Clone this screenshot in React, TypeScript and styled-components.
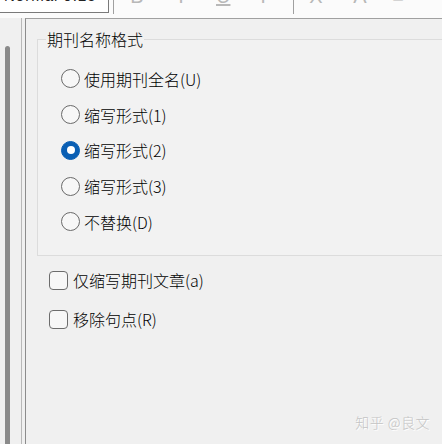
import React from "react";
import styled, { createGlobalStyle } from "styled-components";

const Global = createGlobalStyle`
  html, body { margin: 0; padding: 0; background: #f0f0f0; }
  #root { width: 442px; height: 444px; overflow: hidden; }
  * { box-sizing: border-box; }
`;

const FONT = `"Microsoft YaHei", "Noto Sans CJK SC", "Noto Sans", sans-serif`;

const Screen = styled.div`
  width: 442px;
  height: 444px;
  display: flex;
  flex-direction: column;
  position: relative;
  overflow: hidden;
  font-family: ${FONT};
  font-weight: 300;
  background: #f0f0f0;
`;

const Toolbar = styled.div`
  height: 18px;
  flex: none;
  display: flex;
  align-items: flex-start;
  background: #fbfbfb;
  overflow: hidden;
`;

const Combo = styled.div`
  width: 109px;
  height: 13px;
  border-right: 1px solid #7a7a7a;
  border-bottom: 1px solid #7a7a7a;
  background: #fff;
  overflow: hidden;
  padding-left: 4px;
  font-family: "Liberation Sans", sans-serif;
  font-size: 15px;
  line-height: 15px;
  color: #222;
  flex: none;
`;

const ComboText = styled.div`
  margin-top: -12px;
  letter-spacing: 1px;
`;

const Sep = styled.div<{ $ml: number }>`
  width: 1px;
  height: 14px;
  background: #a0a0a0;
  flex: none;
  margin-left: ${(p) => p.$ml}px;
`;

const Glyph = styled.div<{ $ml: number; $w?: number; $under?: boolean }>`
  margin-left: ${(p) => p.$ml}px;
  width: ${(p) => p.$w ?? 14}px;
  margin-top: -14px;
  font-family: "Liberation Sans", sans-serif;
  font-size: 20px;
  line-height: 20px;
  color: #b8b8b8;
  text-align: center;
  flex: none;
  ${(p) =>
    p.$under
      ? "text-decoration: underline; text-decoration-thickness: 2px; text-underline-offset: 1px;"
      : ""}
`;

const Body = styled.div`
  flex: 1;
  display: flex;
  min-height: 0;
`;

const SidePane = styled.div`
  width: 22px;
  flex: none;
  display: flex;
  padding-top: 28px;
  padding-left: 5px;
  border-right: 1px solid #b8b8b8;
  margin-right: 3px;
`;

const Thumb = styled.div`
  width: 5px;
  flex: none;
  background: #8a8a8a;
  border-radius: 3px 3px 0 0;
`;

const Main = styled.div`
  flex: 1;
  border-left: 1px solid #8c8c8c;
  border-top: 1px solid #a0a0a0;
  background: #f0f0f0;
  padding: 10px 0 0 11px;
  overflow: hidden;
  display: flex;
  flex-direction: column;
`;

const Group = styled.fieldset`
  margin: 0 -30px 0 0;
  padding: 0 0 15px 0;
  border: 1px solid #dcdcdc;
  background: #f2f2f2;
  min-width: 0;
`;

const Legend = styled.legend`
  padding: 0 1px;
  margin-left: 8px;
  font-size: 16px;
  line-height: 21px;
  color: #000;
`;

const Options = styled.div`
  display: flex;
  flex-direction: column;
  padding: 11px 0 0 23px;
`;

const Row = styled.label`
  display: flex;
  align-items: center;
  height: 35.75px;
  font-size: 16px;
  color: #000;
`;

const RadioCircle = styled.span<{ $on?: boolean }>`
  width: 19px;
  height: 19px;
  border-radius: 50%;
  flex: none;
  margin-right: 4px;
  display: flex;
  align-items: center;
  justify-content: center;
  background: ${(p) => (p.$on ? "#0a5fb4" : "#f7f7f7")};
  border: 1px solid ${(p) => (p.$on ? "#0a5fb4" : "#6a6a6a")};
`;

const Dot = styled.span`
  width: 8px;
  height: 8px;
  border-radius: 50%;
  background: #fff;
`;

const Checks = styled.div`
  display: flex;
  flex-direction: column;
  padding: 5px 0 0 12px;
`;

const CheckRow = styled.label`
  display: flex;
  align-items: center;
  height: 39px;
  font-size: 16px;
  color: #000;
`;

const CheckBox = styled.span`
  width: 19px;
  height: 19px;
  border: 1px solid #6c6c6c;
  border-radius: 4px;
  background: #f7f7f7;
  margin-right: 5px;
  flex: none;
`;

const Watermark = styled.div`
  position: absolute;
  right: 12px;
  bottom: 12px;
  font-size: 14px;
  color: #c4c4c4;
  text-shadow: 1px 1px 0 #fff;
  letter-spacing: 0.5px;
`;

const radios = [
  { label: "使用期刊全名(U)", on: false },
  { label: "缩写形式(1)", on: false },
  { label: "缩写形式(2)", on: true },
  { label: "缩写形式(3)", on: false },
  { label: "不替换(D)", on: false },
];

export default function App() {
  return (
    <>
      <Global />
      <Screen>
        <Toolbar>
          <Combo>
            <ComboText>Normal 9.25</ComboText>
          </Combo>
          <Sep $ml={4} />
          <Glyph $ml={16}>B</Glyph>
          <Glyph $ml={30}>I</Glyph>
          <Glyph $ml={28} $under>
            U
          </Glyph>
          <Glyph $ml={26}>T</Glyph>
          <Sep $ml={23} />
          <Glyph $ml={14} $w={16}>
            X
          </Glyph>
          <Glyph $ml={28} $w={16}>
            A
          </Glyph>
          <Glyph $ml={22} $w={16}>
            ≡
          </Glyph>
        </Toolbar>
        <Body>
          <SidePane>
            <Thumb />
          </SidePane>
          <Main>
            <Group>
              <Legend>期刊名称格式</Legend>
              <Options>
                {radios.map((r) => (
                  <Row key={r.label}>
                    <RadioCircle $on={r.on}>{r.on && <Dot />}</RadioCircle>
                    {r.label}
                  </Row>
                ))}
              </Options>
            </Group>
            <Checks>
              <CheckRow>
                <CheckBox />
                仅缩写期刊文章(a)
              </CheckRow>
              <CheckRow>
                <CheckBox />
                移除句点(R)
              </CheckRow>
            </Checks>
          </Main>
        </Body>
        <Watermark>知乎 @良文</Watermark>
      </Screen>
    </>
  );
}
